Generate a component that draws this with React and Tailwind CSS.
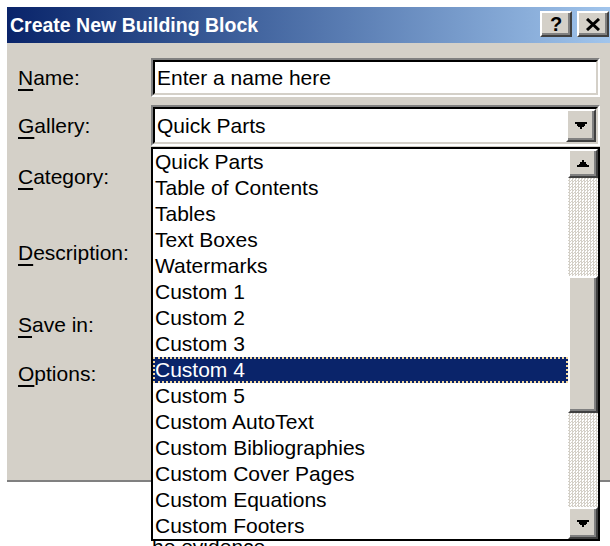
import React from 'react';

const galleries = [
  'Quick Parts',
  'Table of Contents',
  'Tables',
  'Text Boxes',
  'Watermarks',
  'Custom 1',
  'Custom 2',
  'Custom 3',
  'Custom 4',
  'Custom 5',
  'Custom AutoText',
  'Custom Bibliographies',
  'Custom Cover Pages',
  'Custom Equations',
  'Custom Footers',
];

// classic 3D bevels
const raised =
  'bg-[#d4d0c8] border-2 border-t-white border-l-white border-r-[#404040] border-b-[#404040] shadow-[inset_-2px_-2px_0_#808080]';
const sunkenOuter = 'border-2 border-t-[#808080] border-l-[#808080] border-r-white border-b-white';
const sunkenInner = 'border-2 border-t-black border-l-black border-r-[#d4d0c8] border-b-[#d4d0c8] bg-white';

const Arrow = ({ up }) => (
  <svg
    width="12"
    height="7"
    viewBox="0 0 7 4"
    shapeRendering="crispEdges"
    className={up ? 'rotate-180' : ''}
  >
    <polygon
      fill="#000"
      points="0,0 7,0 7,1 6,1 6,2 5,2 5,3 4,3 4,4 3,4 3,3 2,3 2,2 1,2 1,1 0,1"
    />
  </svg>
);

const Label = ({ k, rest }) => (
  <span className="text-[21px] text-black">
    <span className="underline decoration-[1.5px] underline-offset-[4px]">{k}</span>
    {rest}
  </span>
);

const Row = ({ k, rest, h, className = '', children }) => (
  <div className={`flex items-center ${h} ${className}`}>
    <div className="w-[133px] shrink-0">
      <Label k={k} rest={rest} />
    </div>
    <div className="w-[449px] h-full relative">{children}</div>
  </div>
);

const ComboShell = ({ children }) => (
  <div className={`h-full ${sunkenOuter}`}>
    <div className={`h-full flex items-center ${sunkenInner}`}>
      <span className="flex-1 pl-[2px] text-[21px] text-black whitespace-nowrap">{children}</span>
      <div className={`w-[30px] h-full flex items-center justify-center ${raised}`}>
        <Arrow />
      </div>
    </div>
  </div>
);

const GalleryList = () => (
  <div className="absolute z-10 left-0 top-[42px] w-[449px] h-[394px] border-2 border-black bg-white flex">
    <ul className="flex-1 flex flex-col">
      {galleries.map((g) => (
        <li
          key={g}
          className={`h-[26px] shrink-0 flex items-center pl-[2px] text-[21px] whitespace-nowrap ${
            g === 'Custom 4'
              ? 'bg-[#0a246a] text-white outline-2 outline-dotted outline-[#f3d9a0] -outline-offset-2'
              : 'text-black'
          }`}
        >
          {g}
        </li>
      ))}
    </ul>
    <div className="w-[30px] flex flex-col">
      <div className={`h-[29px] flex items-center justify-center ${raised}`}>
        <Arrow up />
      </div>
      <div className="h-[98px] bg-[repeating-conic-gradient(#d4d0c8_0%_25%,#ffffff_0%_50%)] bg-[length:3px_3px]" />
      <div className={`h-[137px] ${raised}`} />
      <div className="h-[94px] bg-[repeating-conic-gradient(#d4d0c8_0%_25%,#ffffff_0%_50%)] bg-[length:3px_3px]" />
      <div className={`h-[32px] flex items-center justify-center ${raised}`}>
        <Arrow />
      </div>
    </div>
  </div>
);

export default function App() {
  return (
    <div className="w-[610px] h-[546px] bg-white overflow-hidden font-['Liberation_Sans',Arial,sans-serif]">
      <div className="ml-[7px] mt-[7px] w-[620px] bg-[#d4d0c8] border-b-2 border-[#808080]">
        {/* title bar */}
        <div className="h-[36px] flex items-start bg-gradient-to-r from-[#0a246a] to-[#a6caf0]">
          <span className="pl-[3px] mt-[5px] text-[19.5px] font-bold text-white leading-[26px]">
            Create New Building Block
          </span>
          <div className="ml-auto mt-[4px] pr-[18px] flex gap-[5px]">
            <div className={`w-[32px] h-[26px] flex items-center justify-center ${raised}`}>
              <span className="text-[20px] font-bold text-black leading-none">?</span>
            </div>
            <div className={`w-[32px] h-[26px] flex items-center justify-center ${raised}`}>
              <svg width="16" height="13" viewBox="0 0 16 13">
                <path d="M2 1 L14 12 M14 1 L2 12" stroke="#000" strokeWidth="3" />
              </svg>
            </div>
          </div>
        </div>

        {/* form */}
        <div className="h-[437px] pl-[11px] pt-[15px] flex flex-col">
          <Row k="N" rest="ame:" h="h-[39px]">
            <div className={`h-full ${sunkenOuter}`}>
              <div className={`h-full flex items-center pl-[2px] text-[21px] text-black ${sunkenInner}`}>
                Enter a name here
              </div>
            </div>
          </Row>
          <Row k="G" rest="allery:" h="h-[41px]" className="mt-[8px]">
            <ComboShell>Quick Parts</ComboShell>
            <GalleryList />
          </Row>
          <Row k="C" rest="ategory:" h="h-[41px]" className="mt-[10px]">
            <ComboShell />
          </Row>
          <Row k="D" rest="escription:" h="h-[95px]" className="mt-[8px]">
            <div className={`h-full ${sunkenOuter}`}>
              <div className={`h-full ${sunkenInner}`} />
            </div>
          </Row>
          <Row k="S" rest="ave in:" h="h-[41px]" className="mt-[4px]">
            <ComboShell />
          </Row>
          <Row k="O" rest="ptions:" h="h-[41px]" className="mt-[8px]">
            <ComboShell />
          </Row>
        </div>
      </div>

      <p className="ml-[152px] mt-[54px] text-[21px] leading-none text-black whitespace-nowrap">
        he evidence.
      </p>
    </div>
  );
}
